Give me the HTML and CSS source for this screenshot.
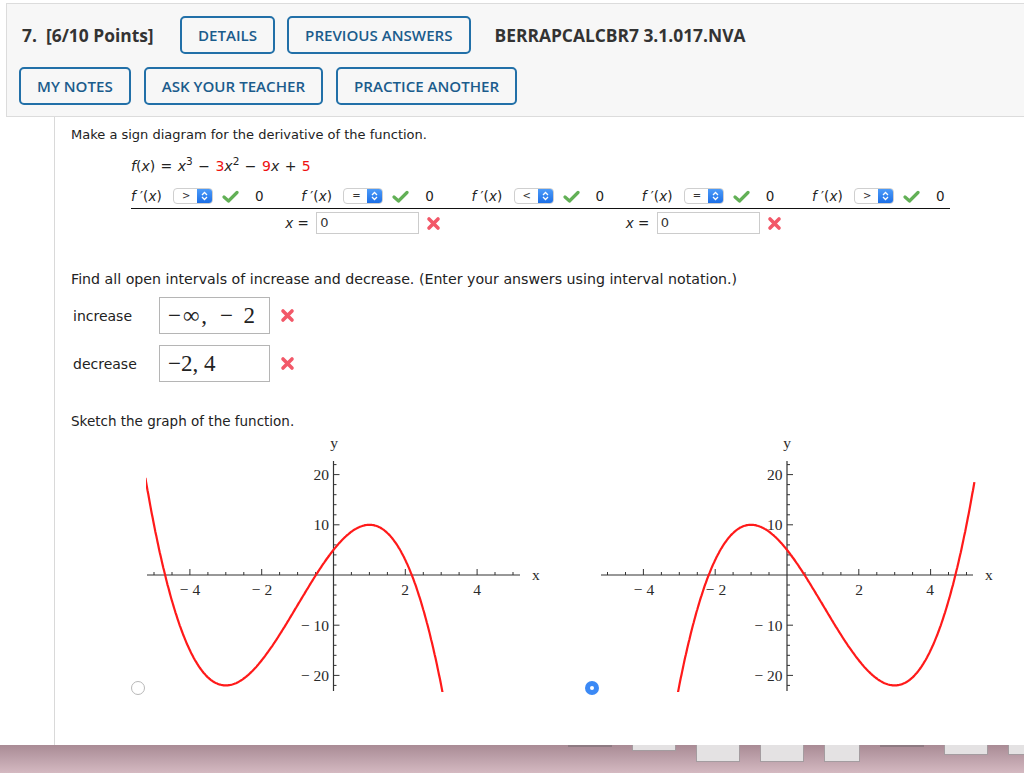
FILE: index.html
```html
<!DOCTYPE html>
<html lang="en">
<head>
  <meta charset="UTF-8">
  <meta name="viewport" content="width=device-width, initial-scale=1.0">
  <title>Question 7 - Sign Diagram</title>
  <link rel="stylesheet" href="styles.css">
</head>
<body>

  <div class="question-head">
    <div class="head-row">
      <span class="q-num">7.&nbsp; [6/10 Points]</span>
      <a class="btn">DETAILS</a>
      <a class="btn">PREVIOUS ANSWERS</a>
      <span class="q-code">BERRAPCALCBR7 3.1.017.NVA</span>
    </div>
    <div class="head-row tools">
      <a class="btn">MY NOTES</a>
      <a class="btn">ASK YOUR TEACHER</a>
      <a class="btn">PRACTICE ANOTHER</a>
    </div>
  </div>

  <div class="question-body">
    <p class="prompt">Make a sign diagram for the derivative of the function.</p>
    <p class="formula"><i>f</i>(<i>x</i>) = <i>x</i><sup>3</sup> − <span class="red">3</span><i>x</i><sup>2</sup> − <span class="red">9</span><i>x</i> + <span class="red">5</span></p>

    <div class="sign-chart">
      <div class="sign-row">
        <div class="sign-cell">
          <span class="fp"><i>f</i> ′(<i>x</i>)</span>
          <span class="sel"><span class="sel-val">&gt;</span><span class="sel-btn"><svg width="7" height="10" viewBox="0 0 7 10"><path d="M1 4 L3.5 1.5 L6 4 M1 6 L3.5 8.5 L6 6" fill="none" stroke="#fff" stroke-width="1.3"/></svg></span></span>
          <svg class="check" width="17" height="13" viewBox="0 0 17 13"><path d="M2 7 L6.5 11 L15 2.5" fill="none" stroke="#62b056" stroke-width="3.2" stroke-linecap="round" stroke-linejoin="round"/></svg>
          <span class="zero">0</span>
        </div>
        <div class="sign-cell">
          <span class="fp"><i>f</i> ′(<i>x</i>)</span>
          <span class="sel"><span class="sel-val">=</span><span class="sel-btn"><svg width="7" height="10" viewBox="0 0 7 10"><path d="M1 4 L3.5 1.5 L6 4 M1 6 L3.5 8.5 L6 6" fill="none" stroke="#fff" stroke-width="1.3"/></svg></span></span>
          <svg class="check" width="17" height="13" viewBox="0 0 17 13"><path d="M2 7 L6.5 11 L15 2.5" fill="none" stroke="#62b056" stroke-width="3.2" stroke-linecap="round" stroke-linejoin="round"/></svg>
          <span class="zero">0</span>
        </div>
        <div class="sign-cell">
          <span class="fp"><i>f</i> ′(<i>x</i>)</span>
          <span class="sel"><span class="sel-val">&lt;</span><span class="sel-btn"><svg width="7" height="10" viewBox="0 0 7 10"><path d="M1 4 L3.5 1.5 L6 4 M1 6 L3.5 8.5 L6 6" fill="none" stroke="#fff" stroke-width="1.3"/></svg></span></span>
          <svg class="check" width="17" height="13" viewBox="0 0 17 13"><path d="M2 7 L6.5 11 L15 2.5" fill="none" stroke="#62b056" stroke-width="3.2" stroke-linecap="round" stroke-linejoin="round"/></svg>
          <span class="zero">0</span>
        </div>
        <div class="sign-cell">
          <span class="fp"><i>f</i> ′(<i>x</i>)</span>
          <span class="sel"><span class="sel-val">=</span><span class="sel-btn"><svg width="7" height="10" viewBox="0 0 7 10"><path d="M1 4 L3.5 1.5 L6 4 M1 6 L3.5 8.5 L6 6" fill="none" stroke="#fff" stroke-width="1.3"/></svg></span></span>
          <svg class="check" width="17" height="13" viewBox="0 0 17 13"><path d="M2 7 L6.5 11 L15 2.5" fill="none" stroke="#62b056" stroke-width="3.2" stroke-linecap="round" stroke-linejoin="round"/></svg>
          <span class="zero">0</span>
        </div>
        <div class="sign-cell">
          <span class="fp"><i>f</i> ′(<i>x</i>)</span>
          <span class="sel"><span class="sel-val">&gt;</span><span class="sel-btn"><svg width="7" height="10" viewBox="0 0 7 10"><path d="M1 4 L3.5 1.5 L6 4 M1 6 L3.5 8.5 L6 6" fill="none" stroke="#fff" stroke-width="1.3"/></svg></span></span>
          <svg class="check" width="17" height="13" viewBox="0 0 17 13"><path d="M2 7 L6.5 11 L15 2.5" fill="none" stroke="#62b056" stroke-width="3.2" stroke-linecap="round" stroke-linejoin="round"/></svg>
          <span class="zero">0</span>
        </div>
      </div>

      <div class="crit-row">
        <div class="crit first">
          <span class="crit-label"><i>x</i> =</span>
          <span class="crit-input">0</span>
          <svg class="cross" width="15" height="15" viewBox="0 0 15 15"><path d="M3 3 L12 12 M12 3 L3 12" stroke="#f25868" stroke-width="3.6" stroke-linecap="round"/></svg>
        </div>
        <div class="crit second">
          <span class="crit-label"><i>x</i> =</span>
          <span class="crit-input">0</span>
          <svg class="cross" width="15" height="15" viewBox="0 0 15 15"><path d="M3 3 L12 12 M12 3 L3 12" stroke="#f25868" stroke-width="3.6" stroke-linecap="round"/></svg>
        </div>
      </div>
    </div>

    <p class="find">Find all open intervals of increase and decrease. (Enter your answers using interval notation.)</p>

    <div class="answer-row">
      <span class="answer-label">increase</span>
      <span class="answer-box"><span class="wide">−∞,</span> <span class="op">−</span> 2</span>
      <svg class="cross" width="15" height="15" viewBox="0 0 15 15"><path d="M3 3 L12 12 M12 3 L3 12" stroke="#f25868" stroke-width="3.6" stroke-linecap="round"/></svg>
    </div>
    <div class="answer-row second">
      <span class="answer-label">decrease</span>
      <span class="answer-box">−2, 4</span>
      <svg class="cross" width="15" height="15" viewBox="0 0 15 15"><path d="M3 3 L12 12 M12 3 L3 12" stroke="#f25868" stroke-width="3.6" stroke-linecap="round"/></svg>
    </div>

    <p class="sketch">Sketch the graph of the function.</p>

    <div class="graphs">
      <div class="graph-opt">
        <span class="radio"></span>
        <svg id="graph-a" class="graph" width="400" height="272" viewBox="146 432 400 272">
          <defs><clipPath id="clip-a"><rect x="140" y="455" width="420" height="238"/></clipPath></defs>
          <path d="M147 576 H520 M333.5 462 V692" stroke="#333" stroke-width="1.2" fill="none"/>
          <path class="ticks" stroke="#333" stroke-width="1" fill="none"/>
          <g class="labels">
            <text x="190" y="596" text-anchor="middle">− 4</text>
            <text x="262" y="596" text-anchor="middle">− 2</text>
            <text x="405" y="596" text-anchor="middle">2</text>
            <text x="477" y="596" text-anchor="middle">4</text>
            <text x="329" y="481" text-anchor="end">20</text>
            <text x="329" y="531" text-anchor="end">10</text>
            <text x="329" y="632" text-anchor="end">− 10</text>
            <text x="329" y="682" text-anchor="end">− 20</text>
            <text x="532" y="581">x</text>
            <text x="334" y="449" text-anchor="middle">y</text>
          </g>
          <polyline class="curve" clip-path="url(#clip-a)" fill="none" stroke="#ff1a1a" stroke-width="2.2"/>
        </svg>
      </div>
      <div class="graph-opt">
        <span class="radio on"></span>
        <svg id="graph-b" class="graph" width="400" height="272" viewBox="600 432 400 272">
          <defs><clipPath id="clip-b"><rect x="595" y="455" width="420" height="238"/></clipPath></defs>
          <path d="M601 576 H973 M787 462 V692" stroke="#333" stroke-width="1.2" fill="none"/>
          <path class="ticks" stroke="#333" stroke-width="1" fill="none"/>
          <g class="labels">
            <text x="644" y="596" text-anchor="middle">− 4</text>
            <text x="716" y="596" text-anchor="middle">− 2</text>
            <text x="859" y="596" text-anchor="middle">2</text>
            <text x="930" y="596" text-anchor="middle">4</text>
            <text x="782.5" y="481" text-anchor="end">20</text>
            <text x="782.5" y="531" text-anchor="end">10</text>
            <text x="782.5" y="632" text-anchor="end">− 10</text>
            <text x="782.5" y="682" text-anchor="end">− 20</text>
            <text x="985" y="581">x</text>
            <text x="787" y="449" text-anchor="middle">y</text>
          </g>
          <polyline class="curve" clip-path="url(#clip-b)" fill="none" stroke="#ff1a1a" stroke-width="2.2"/>
        </svg>
      </div>
    </div>
  </div>

  <div class="dock">
    <span class="thumb line"></span>
    <span class="thumb short"></span>
    <span class="thumb tall"></span>
    <span class="thumb tall"></span>
    <span class="thumb tall narrow"></span>
    <span class="thumb line"></span>
    <span class="thumb mid"></span>
    <span class="thumb mid"></span>
  </div>

  <script>
    const OY = 576, UY = 5.02, UX = 35.9;

    function drawGraph(id, ox, f, x0, x1) {
      const svg = document.getElementById(id);
      let d = "";
      for (let i = -10; i <= 10; i++) {
        if (i === 0) continue;
        const len = i % 4 === 0 ? 6 : 3;
        d += `M${(ox + i * 0.5 * UX).toFixed(1)} ${OY} v${-len} `;
      }
      for (let j = -11; j <= 11; j++) {
        if (j === 0) continue;
        const len = j % 5 === 0 ? 6 : 3;
        d += `M${ox} ${(OY - j * 2 * UY).toFixed(1)} h${len} `;
      }
      svg.querySelector(".ticks").setAttribute("d", d);

      const pts = [];
      for (let u = x0; u <= x1 + 1e-9; u += 0.02) {
        pts.push((ox + u * UX).toFixed(1) + "," + (OY - f(u) * UY).toFixed(1));
      }
      svg.querySelector(".curve").setAttribute("points", pts.join(" "));
    }

    // left choice is f(-x), right choice is the real f
    drawGraph("graph-a", 333.5, x => -x * x * x - 3 * x * x + 9 * x + 5, -5.24, 3.1);
    drawGraph("graph-b", 787, x => x * x * x - 3 * x * x - 9 * x + 5, -3.1, 5.22);
  </script>

</body>
</html>
```

FILE: styles.css
```css
body {
  margin: 0;
  padding-top: 3px;
  font-family: 'DejaVu Sans', Verdana, sans-serif;
  color: #222;
  background-color: #fff;
  overflow: hidden;
}

/* question header */
.question-head {
  margin-left: 6px;
  background-color: #f7f7f7;
  border: 1px solid #dcdcdc;
  border-right: none;
  padding: 12px 0 11px 12px;
}

.head-row {
  display: flex;
  align-items: center;
  gap: 12px;
}

.head-row.tools {
  gap: 13px;
  margin-top: 13px;
}

.q-num, .q-code {
  font-family: 'Open Sans', sans-serif;
  font-weight: 700;
  font-size: 17.4px;
  color: #333;
}

.q-num {
  width: 146px;
  padding-left: 3px;
}

.q-code {
  margin-left: 12px;
}

.btn {
  display: flex;
  align-items: center;
  box-sizing: border-box;
  height: 38px;
  padding: 0 16px;
  border: 2px solid #2270a8;
  border-radius: 5px;
  font-family: 'Open Sans', sans-serif;
  font-weight: 600;
  font-size: 15.1px;
  color: #1b5c8c;
  cursor: pointer;
}

/* question body */
.question-body {
  margin-left: 54px;
  height: 628px;
  box-sizing: border-box;
  border-left: 1px solid #d9d9d9;
  padding: 9px 0 0 16px;
  font-size: 13px;
}

.prompt, .find, .sketch {
  margin: 0;
  line-height: 18px;
}

.formula {
  margin: 13px 0 0 60px;
  line-height: 18px;
  font-size: 14px;
  word-spacing: 1px;
}

.formula sup {
  font-size: 10.5px;
  line-height: 0;
}

.red {
  color: #ee1111;
}

/* sign diagram */
.sign-chart {
  margin: 9px 0 0 60px;
  width: 819px;
}

.sign-row, .crit-row {
  display: grid;
  grid-template-columns: repeat(4, 170.25px) auto;
  align-items: center;
}

.sign-row {
  height: 24px;
  border-bottom: 1.5px solid #111;
}

.sign-cell {
  display: flex;
  align-items: center;
  font-size: 13.5px;
}

.fp {
  width: 42px;
}

.sel {
  display: flex;
  width: 40px;
  height: 16px;
  box-sizing: border-box;
  border: 1px solid #cfcfcf;
  border-radius: 4px;
  overflow: hidden;
  margin-right: 9px;
  background-color: #fff;
}

.sel-val {
  flex: 1;
  font-size: 10px;
  line-height: 14px;
  padding-left: 8px;
  color: #333;
}

.sel-btn {
  width: 15px;
  display: flex;
  align-items: center;
  justify-content: center;
  background: linear-gradient(#4c9bf9, #1d6fe6);
}

.check {
  margin-right: 16px;
}

.crit-row {
  margin-top: 3px;
  font-size: 13.5px;
}

.crit {
  grid-column: 2;
  margin-left: -16px;
  display: flex;
  align-items: center;
}

.crit.second {
  grid-column: 4;
}

.crit-label {
  width: 31px;
}

.crit-input {
  width: 103px;
  height: 22px;
  box-sizing: border-box;
  border: 1px solid #cccccc;
  padding-left: 3px;
  line-height: 20px;
  font-size: 13px;
  color: #333;
}

.crit .cross {
  margin-left: 7px;
}

/* intervals */
.find {
  margin-top: 36px;
  font-size: 14.2px;
}

.answer-row {
  display: flex;
  align-items: center;
  margin-top: 9px;
  font-size: 14px;
}

.answer-row.second {
  margin-top: 11px;
}

.answer-label {
  width: 86px;
  padding-left: 2px;
}

.answer-box {
  width: 111px;
  height: 37px;
  box-sizing: border-box;
  border: 1px solid #b5b5b5;
  padding-left: 8px;
  font-family: 'Liberation Serif', serif;
  font-size: 23px;
  line-height: 35px;
  color: #222;
}

.answer-box .wide {
  letter-spacing: 2px;
}

.answer-box .op {
  margin-left: 5px;
  margin-right: 5px;
}

.answer-row .cross {
  margin-left: 10px;
}

/* graphs */
.sketch {
  margin-top: 30px;
  font-size: 13.5px;
}

.graphs {
  display: flex;
  margin: 1px 0 0 60px;
}

.graph-opt {
  display: flex;
  align-items: flex-end;
  flex-shrink: 0;
}

.graph-opt + .graph-opt {
  margin-left: 39px;
}

.radio {
  position: relative;
  width: 14px;
  height: 14px;
  box-sizing: border-box;
  margin: 0 1px 8px 0;
  border: 1px solid #b8b8b8;
  border-radius: 50%;
  background-color: #fff;
}

.radio.on {
  border: none;
  background-color: #3b89f5;
}

.radio.on::after {
  content: "";
  position: absolute;
  left: 5px;
  top: 5px;
  width: 4px;
  height: 4px;
  border-radius: 50%;
  background-color: #fff;
}

.graph text {
  font-family: 'Liberation Serif', serif;
  font-size: 15.5px;
  fill: #2a2a2a;
}

/* desktop strip under the window */
.dock {
  height: 28px;
  display: flex;
  align-items: flex-start;
  gap: 20px;
  padding-left: 568px;
  background: linear-gradient(#a98b95, #d4b9c1);
}

.thumb {
  flex-shrink: 0;
  width: 44px;
  box-sizing: border-box;
  background-color: #e4e2e3;
  border: 1px solid #a49ca0;
  border-top: none;
}

.thumb.line {
  height: 2px;
  border: none;
  background-color: #8e7a82;
}

.thumb.short {
  height: 6px;
}

.thumb.tall {
  height: 17px;
}

.thumb.mid {
  height: 10px;
}

.thumb.narrow {
  width: 36px;
}
```
